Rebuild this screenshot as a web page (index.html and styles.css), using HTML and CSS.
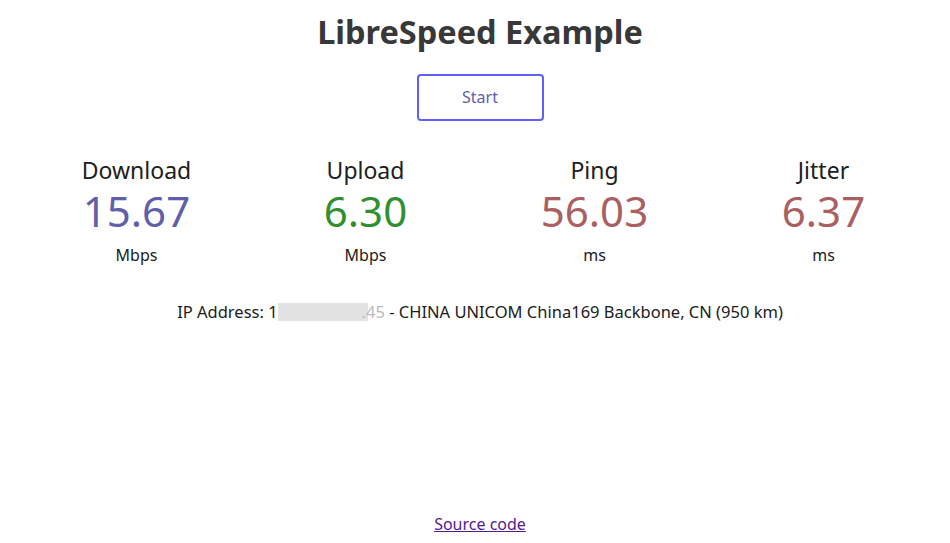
FILE: index.html
```html
<!DOCTYPE html>
<html>
<head>
  <meta charset="UTF-8">
  <title>LibreSpeed Example</title>
  <meta name="viewport" content="width=device-width, initial-scale=1.0"/>
  <link rel="stylesheet" href="styles.css">
</head>
<body>
  <div class="page">
    <h1>LibreSpeed Example</h1>
    <div class="startBtn">Start</div>

    <div class="tests">
      <div class="testArea">
        <div class="testName">Download</div>
        <div class="meterText dl">15.67</div>
        <div class="unit">Mbps</div>
      </div>
      <div class="testArea">
        <div class="testName">Upload</div>
        <div class="meterText ul">6.30</div>
        <div class="unit">Mbps</div>
      </div>
      <div class="testArea">
        <div class="testName">Ping</div>
        <div class="meterText ping">56.03</div>
        <div class="unit">ms</div>
      </div>
      <div class="testArea">
        <div class="testName">Jitter</div>
        <div class="meterText ping">6.37</div>
        <div class="unit">ms</div>
      </div>
    </div>

    <div class="ipArea">IP Address: 1<span class="mask"></span><span class="ipBlur">.45</span> - CHINA UNICOM China169 Backbone, CN (950 km)</div>

    <div class="footer"><a href="#">Source code</a></div>
  </div>
</body>
</html>
```

FILE: styles.css
```css
html, body { margin: 0; padding: 0; }
body { font-family: "Noto Sans", sans-serif; color: #202020; background: #fff; font-size: 16px; }
.page { min-height: 543px; display: flex; flex-direction: column; align-items: center; box-sizing: border-box; padding: 0 0 8px 10px; }
h1 { font-size: 32.5px; font-weight: bold; color: #383838; margin: 11px 0 0; line-height: 42px; }
.startBtn { margin-top: 21px; width: 127px; height: 47px; box-sizing: border-box; border: 2px solid #6060FF; border-radius: 4px; color: #6060AA; text-align: center; line-height: 43px; font-size: 16px; }
.tests { display: grid; grid-template-columns: repeat(4, 1fr); width: 916px; margin-top: 36px; }
.testArea { text-align: center; }
.testName { font-size: 23px; line-height: 26px; }
.meterText { font-size: 42px; line-height: 56px; }
.dl { color: #6060AA; }
.ul { color: #309030; }
.ping { color: #AA6060; }
.unit { font-size: 16px; line-height: 22px; margin-top: 5px; }
.ipArea { margin-top: 35px; font-size: 16.5px; line-height: 22px; }
.ipBlur { color: #bbb; }
.mask { display: inline-block; width: 90px; height: 18px; margin-right: -6px; background: #e2e2e2; vertical-align: -3px; }
.footer { margin-top: auto; line-height: 22px; }
.footer a { color: #551A8B; }
```
